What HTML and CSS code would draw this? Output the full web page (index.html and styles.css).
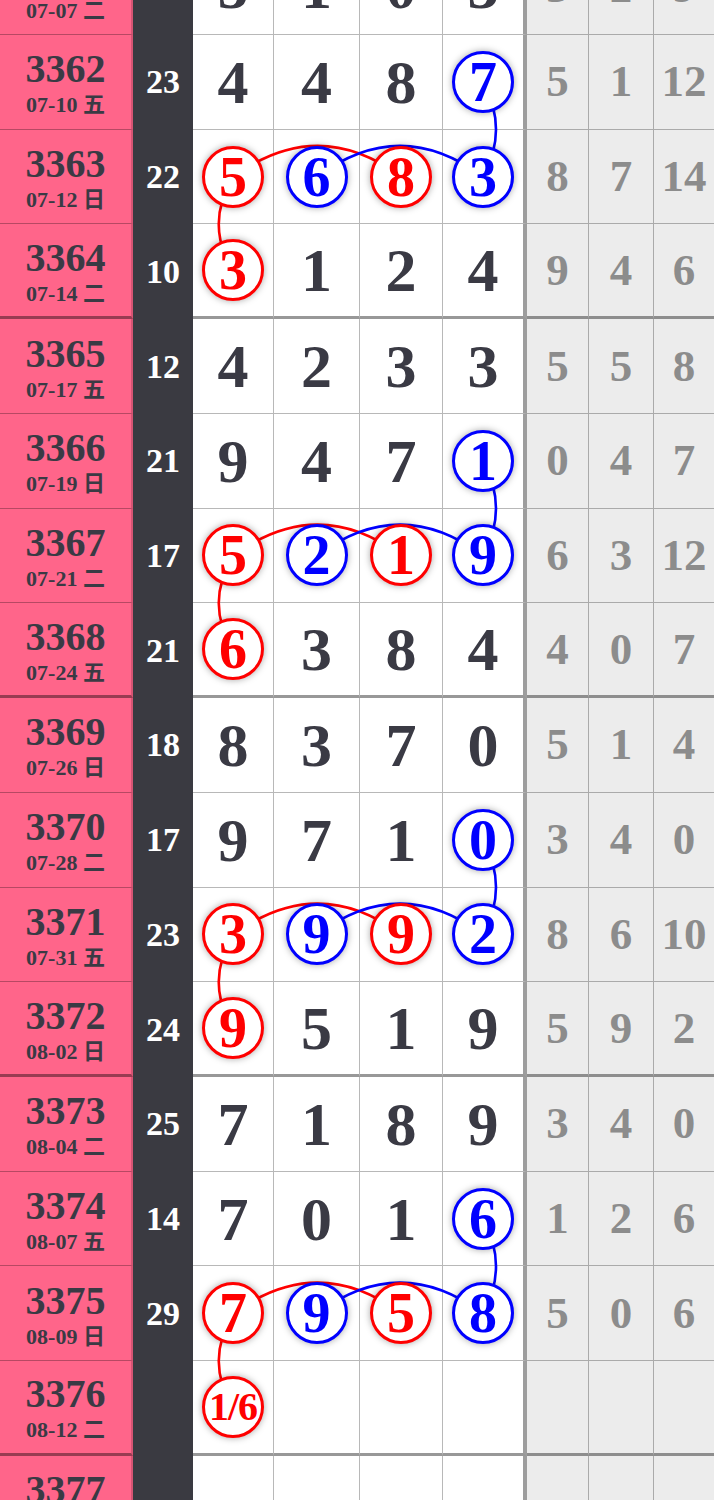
FILE: index.html
```html
<!DOCTYPE html>
<html lang="zh">
  <head>
    <meta charset="UTF-8" />
    <meta name="viewport" content="width=device-width, initial-scale=1.0" />
    <title>走势图</title>
    <link rel="stylesheet" href="styles.css">
  </head>
  <body>
    <div class="board">
      <!-- connector lines, drawn under the balls -->
      <svg class="links" width="714" height="1610" viewBox="0 0 714 1610">
        <defs>
          <g id="grp" fill="none" stroke-width="2.6">
            <path d="M483 142.1 Q509 189.5 483 236.8" stroke="#0000ff" />
            <path d="M233.5 236.8 Q204 284.2 233.5 331.6" stroke="#ff0000" />
            <path d="M233.5 236.8 Q317.5 174.8 401.5 236.8" stroke="#ff0000" />
            <path d="M317 236.8 Q400 174.8 483 236.8" stroke="#0000ff" />
          </g>
        </defs>
        <use href="#grp" />
        <use href="#grp" y="378.9" />
        <use href="#grp" y="757.8" />
        <use href="#grp" y="1136.8" />
      </svg>

      <div class="row">
        <div class="cell issue"><b>3361</b><small>07-07 二</small></div>
        <div class="cell sum">16</div>
        <div class="cell num">5</div>
        <div class="cell num">1</div>
        <div class="cell num">0</div>
        <div class="cell num last">3</div>
        <div class="cell gap">3</div>
        <div class="cell gap">2</div>
        <div class="cell gap">9</div>
      </div>
      <div class="row">
        <div class="cell issue"><b>3362</b><small>07-10 五</small></div>
        <div class="cell sum">23</div>
        <div class="cell num">4</div>
        <div class="cell num">4</div>
        <div class="cell num">8</div>
        <div class="cell num last"><span class="ball blue">7</span></div>
        <div class="cell gap">5</div>
        <div class="cell gap">1</div>
        <div class="cell gap">12</div>
      </div>
      <div class="row">
        <div class="cell issue"><b>3363</b><small>07-12 日</small></div>
        <div class="cell sum">22</div>
        <div class="cell num"><span class="ball red">5</span></div>
        <div class="cell num"><span class="ball blue">6</span></div>
        <div class="cell num"><span class="ball red">8</span></div>
        <div class="cell num last"><span class="ball blue">3</span></div>
        <div class="cell gap">8</div>
        <div class="cell gap">7</div>
        <div class="cell gap">14</div>
      </div>
      <div class="row end">
        <div class="cell issue"><b>3364</b><small>07-14 二</small></div>
        <div class="cell sum">10</div>
        <div class="cell num"><span class="ball red">3</span></div>
        <div class="cell num">1</div>
        <div class="cell num">2</div>
        <div class="cell num last">4</div>
        <div class="cell gap">9</div>
        <div class="cell gap">4</div>
        <div class="cell gap">6</div>
      </div>

      <div class="row">
        <div class="cell issue"><b>3365</b><small>07-17 五</small></div>
        <div class="cell sum">12</div>
        <div class="cell num">4</div>
        <div class="cell num">2</div>
        <div class="cell num">3</div>
        <div class="cell num last">3</div>
        <div class="cell gap">5</div>
        <div class="cell gap">5</div>
        <div class="cell gap">8</div>
      </div>
      <div class="row">
        <div class="cell issue"><b>3366</b><small>07-19 日</small></div>
        <div class="cell sum">21</div>
        <div class="cell num">9</div>
        <div class="cell num">4</div>
        <div class="cell num">7</div>
        <div class="cell num last"><span class="ball blue">1</span></div>
        <div class="cell gap">0</div>
        <div class="cell gap">4</div>
        <div class="cell gap">7</div>
      </div>
      <div class="row">
        <div class="cell issue"><b>3367</b><small>07-21 二</small></div>
        <div class="cell sum">17</div>
        <div class="cell num"><span class="ball red">5</span></div>
        <div class="cell num"><span class="ball blue">2</span></div>
        <div class="cell num"><span class="ball red">1</span></div>
        <div class="cell num last"><span class="ball blue">9</span></div>
        <div class="cell gap">6</div>
        <div class="cell gap">3</div>
        <div class="cell gap">12</div>
      </div>
      <div class="row end">
        <div class="cell issue"><b>3368</b><small>07-24 五</small></div>
        <div class="cell sum">21</div>
        <div class="cell num"><span class="ball red">6</span></div>
        <div class="cell num">3</div>
        <div class="cell num">8</div>
        <div class="cell num last">4</div>
        <div class="cell gap">4</div>
        <div class="cell gap">0</div>
        <div class="cell gap">7</div>
      </div>

      <div class="row">
        <div class="cell issue"><b>3369</b><small>07-26 日</small></div>
        <div class="cell sum">18</div>
        <div class="cell num">8</div>
        <div class="cell num">3</div>
        <div class="cell num">7</div>
        <div class="cell num last">0</div>
        <div class="cell gap">5</div>
        <div class="cell gap">1</div>
        <div class="cell gap">4</div>
      </div>
      <div class="row">
        <div class="cell issue"><b>3370</b><small>07-28 二</small></div>
        <div class="cell sum">17</div>
        <div class="cell num">9</div>
        <div class="cell num">7</div>
        <div class="cell num">1</div>
        <div class="cell num last"><span class="ball blue">0</span></div>
        <div class="cell gap">3</div>
        <div class="cell gap">4</div>
        <div class="cell gap">0</div>
      </div>
      <div class="row">
        <div class="cell issue"><b>3371</b><small>07-31 五</small></div>
        <div class="cell sum">23</div>
        <div class="cell num"><span class="ball red">3</span></div>
        <div class="cell num"><span class="ball blue">9</span></div>
        <div class="cell num"><span class="ball red">9</span></div>
        <div class="cell num last"><span class="ball blue">2</span></div>
        <div class="cell gap">8</div>
        <div class="cell gap">6</div>
        <div class="cell gap">10</div>
      </div>
      <div class="row end">
        <div class="cell issue"><b>3372</b><small>08-02 日</small></div>
        <div class="cell sum">24</div>
        <div class="cell num"><span class="ball red">9</span></div>
        <div class="cell num">5</div>
        <div class="cell num">1</div>
        <div class="cell num last">9</div>
        <div class="cell gap">5</div>
        <div class="cell gap">9</div>
        <div class="cell gap">2</div>
      </div>

      <div class="row">
        <div class="cell issue"><b>3373</b><small>08-04 二</small></div>
        <div class="cell sum">25</div>
        <div class="cell num">7</div>
        <div class="cell num">1</div>
        <div class="cell num">8</div>
        <div class="cell num last">9</div>
        <div class="cell gap">3</div>
        <div class="cell gap">4</div>
        <div class="cell gap">0</div>
      </div>
      <div class="row">
        <div class="cell issue"><b>3374</b><small>08-07 五</small></div>
        <div class="cell sum">14</div>
        <div class="cell num">7</div>
        <div class="cell num">0</div>
        <div class="cell num">1</div>
        <div class="cell num last"><span class="ball blue">6</span></div>
        <div class="cell gap">1</div>
        <div class="cell gap">2</div>
        <div class="cell gap">6</div>
      </div>
      <div class="row">
        <div class="cell issue"><b>3375</b><small>08-09 日</small></div>
        <div class="cell sum">29</div>
        <div class="cell num"><span class="ball red">7</span></div>
        <div class="cell num"><span class="ball blue">9</span></div>
        <div class="cell num"><span class="ball red">5</span></div>
        <div class="cell num last"><span class="ball blue">8</span></div>
        <div class="cell gap">5</div>
        <div class="cell gap">0</div>
        <div class="cell gap">6</div>
      </div>
      <div class="row end">
        <div class="cell issue"><b>3376</b><small>08-12 二</small></div>
        <div class="cell sum"></div>
        <div class="cell num"><span class="ball red small">1/6</span></div>
        <div class="cell num"></div>
        <div class="cell num"></div>
        <div class="cell num last"></div>
        <div class="cell gap"></div>
        <div class="cell gap"></div>
        <div class="cell gap"></div>
      </div>

      <div class="row">
        <div class="cell issue"><b>3377</b><small>08-14 四</small></div>
        <div class="cell sum"></div>
        <div class="cell num"></div>
        <div class="cell num"></div>
        <div class="cell num"></div>
        <div class="cell num last"></div>
        <div class="cell gap"></div>
        <div class="cell gap"></div>
        <div class="cell gap"></div>
      </div>
    </div>
  </body>
</html>
```

FILE: styles.css
```css
* {
  margin: 0;
  padding: 0;
  box-sizing: border-box;
}
body {
  width: 714px;
  height: 1500px;
  overflow: hidden;
  background-color: #ffffff;
  font-family: "Liberation Serif", "Noto Sans CJK SC", serif;
  font-weight: bold;
  color: #3a3a44;
}
.board {
  position: relative;
  width: 714px;
  margin-top: -59.7px;
}
.links {
  position: absolute;
  top: 0;
  left: 0;
  z-index: 1;
  pointer-events: none;
}
.row {
  display: grid;
  grid-template-columns: 133px 60px 81px 86px 83px 84px 62px 65px 60px;
  height: 94.73px;
}
.cell {
  display: flex;
  align-items: center;
  justify-content: center;
  border-bottom: 1px solid rgba(0, 0, 0, 0.28);
  border-right: 1px solid rgba(0, 0, 0, 0.28);
  line-height: 1;
}
.row.end .cell {
  border-bottom: 3px solid rgba(0, 0, 0, 0.4);
}
.issue {
  flex-direction: column;
  background-color: #ff658a;
  border-right: 2px solid rgba(0, 0, 0, 0.16);
  padding-top: 2px;
}
.issue b {
  font-size: 40px;
  line-height: 1;
}
.issue small {
  font-size: 22px;
  margin-top: 5px;
}
.row .sum,
.row.end .sum {
  background-color: #3a3a41;
  color: #ffffff;
  font-size: 34px;
  border: none;
}
.num {
  background-color: #ffffff;
  font-size: 62px;
}
.num.last {
  border-right: 4px solid rgba(0, 0, 0, 0.38);
}
.gap {
  background-color: #ececec;
  color: #8c8c8c;
  font-size: 45px;
}
.gap:last-child {
  border-right: none;
}
.ball {
  position: relative;
  z-index: 2;
  display: flex;
  align-items: center;
  justify-content: center;
  width: 62px;
  height: 62px;
  border-radius: 50%;
  border: 3px solid;
  background-color: #ffffff;
  box-shadow: 0 0 7px rgba(0, 0, 0, 0.35);
  font-size: 56px;
  line-height: 1;
}
.ball.red {
  color: #ff0000;
  border-color: #ff0000;
}
.ball.blue {
  color: #0000ff;
  border-color: #0000ff;
}
.ball.small {
  font-size: 40px;
  letter-spacing: -1px;
}
```
